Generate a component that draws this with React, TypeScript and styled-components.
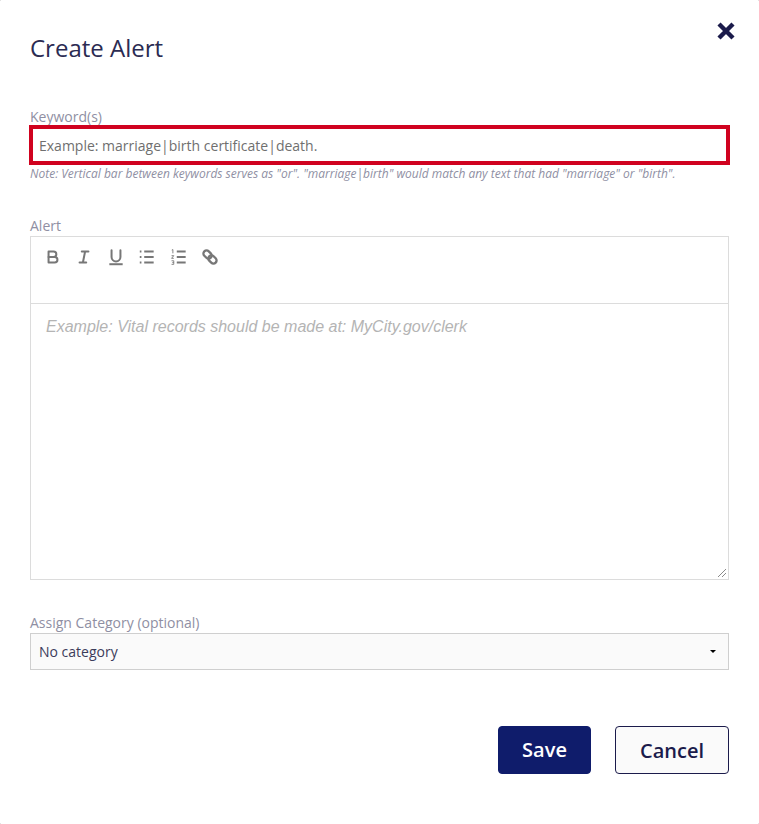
import styled, { createGlobalStyle } from "styled-components";

const GlobalStyle = createGlobalStyle`
  html, body {
    margin: 0;
    padding: 0;
    background: #8a8a8a;
    font-family: "Open Sans", sans-serif;
  }
`;

const Modal = styled.div`
  position: relative;
  box-sizing: border-box;
  width: 759px;
  height: 824px;
  padding: 30px 30px 0 30px;
  background: #fff;
  border-radius: 1px;
  overflow: hidden;
`;

const CloseButton = styled.button`
  position: absolute;
  top: 21px;
  right: 23px;
  width: 20px;
  height: 20px;
  padding: 0;
  border: 0;
  background: none;
  color: #1b1b4b;
`;

const Title = styled.h2`
  margin: 0;
  font-size: 24px;
  font-weight: 400;
  line-height: 36px;
  color: #2b2b52;
`;

const Field = styled.div<{ $top: number }>`
  display: flex;
  flex-direction: column;
  margin-top: ${(p) => p.$top}px;
`;

const Label = styled.label`
  font-size: 14px;
  line-height: 16px;
  color: #8f8fa3;
`;

const KeywordInput = styled.div`
  box-sizing: border-box;
  display: flex;
  align-items: center;
  height: 40px;
  margin: 0 -1px;
  padding: 0 6px;
  border: 4px solid #d0021f;
  background: #fff;
  font-size: 14px;
  color: #6f6f6f;
`;

const Note = styled.div`
  margin-top: 1px;
  font-size: 12px;
  line-height: 16px;
  font-style: italic;
  color: #8f8fa3;
`;

const Editor = styled.div`
  position: relative;
  box-sizing: border-box;
  height: 344px;
  margin-top: 2px;
  border: 1px solid #dcdcdc;
`;

const Toolbar = styled.div`
  box-sizing: border-box;
  display: flex;
  align-items: flex-start;
  gap: 11.4px;
  height: 67px;
  padding: 10px 0 0 12px;
  border-bottom: 1px solid #dcdcdc;
`;

const ToolIcon = styled.svg.attrs({ width: 20, height: 20, viewBox: "0 0 18 18" })`
  display: block;
  fill: none;
  stroke: #777;
  stroke-width: 1.8;
  stroke-linecap: round;
  stroke-linejoin: round;
`;

const Placeholder = styled.div`
  padding: 13px 15px;
  font-family: "Liberation Sans", Arial, sans-serif;
  font-size: 16px;
  line-height: 20px;
  font-style: italic;
  color: #b4b4b4;
`;

const ResizeGrip = styled.svg`
  position: absolute;
  right: 1px;
  bottom: 1px;
`;

const Select = styled.div`
  box-sizing: border-box;
  display: flex;
  align-items: center;
  justify-content: space-between;
  height: 37px;
  margin-top: 2px;
  padding: 0 12px 0 8px;
  border: 1px solid #cfcfcf;
  background: #fafafa;
  font-size: 14px;
  color: #3c3c5a;
`;

const Caret = styled.span`
  width: 0;
  height: 0;
  border-left: 3px solid transparent;
  border-right: 3px solid transparent;
  border-top: 3px solid #000;
`;

const Actions = styled.div`
  display: flex;
  justify-content: flex-end;
  gap: 24px;
  margin-top: 56px;
`;

const Button = styled.button<{ $primary?: boolean }>`
  box-sizing: border-box;
  height: 48px;
  width: ${(p) => (p.$primary ? "93px" : "114px")};
  padding: 0 0 ${(p) => (p.$primary ? "2px" : "0")} 0;
  border: 1px solid;
  border-color: ${(p) => (p.$primary ? "#0f1c6b" : "#1b1b4b")};
  border-radius: 4px;
  background: ${(p) => (p.$primary ? "#0f1c6b" : "#fafafa")};
  font-family: "Open Sans", sans-serif;
  font-size: 20px;
  font-weight: 600;
  color: ${(p) => (p.$primary ? "#fff" : "#1b1b4b")};
`;

export default function App() {
  return (
    <>
      <GlobalStyle />
      <Modal>
        <CloseButton aria-label="Close">
          <svg width="20" height="20" viewBox="0 0 20 20">
            <path d="M3 3 L17 17 M17 3 L3 17" stroke="currentColor" strokeWidth="4.4" />
          </svg>
        </CloseButton>
        <Title>Create Alert</Title>
        <Field $top={43}>
          <Label>Keyword(s)</Label>
          <KeywordInput>Example: marriage|birth certificate|death.</KeywordInput>
          <Note>
            Note: Vertical bar between keywords serves as "or". "marriage|birth" would match any text that had "marriage" or "birth".
          </Note>
        </Field>
        <Field $top={36}>
          <Label>Alert</Label>
          <Editor>
            <Toolbar>
              <ToolIcon>
                <path d="M5 4h4.5a2.5 2.5 0 0 1 0 5H5z" />
                <path d="M5 9h5.5a2.5 2.5 0 0 1 0 5H5z" />
              </ToolIcon>
              <ToolIcon strokeWidth={1.4}>
                <path d="M7 4h6M5 14h6M8 14l2-10" />
              </ToolIcon>
              <ToolIcon strokeWidth={1.4}>
                <path d="M5 3v6a4 4 0 0 0 8 0V3" />
                <path d="M3 15.5h12" strokeLinecap="butt" />
              </ToolIcon>
              <ToolIcon>
                <path d="M6.5 4h8.5M6.5 9h8.5M6.5 14h8.5" strokeLinecap="butt" />
                <path d="M2.5 4h1.5M2.5 9h1.5M2.5 14h1.5" strokeLinecap="butt" />
              </ToolIcon>
              <ToolIcon>
                <path d="M7 4h8M7 9h8M7 14h8" strokeLinecap="butt" />
                <path d="M2.5 2.8l1-.5v3.4M2.3 7.8h2l-2 2.4h2M2.3 12.4h2v3.2h-2M3 14h1.3" strokeWidth="0.8" strokeLinecap="butt" />
              </ToolIcon>
              <ToolIcon>
                <g transform="rotate(45 9 9)" strokeWidth="2.1">
                  <rect x="1.8" y="6.2" width="8.2" height="5.6" rx="2.8" />
                  <rect x="8" y="6.2" width="8.2" height="5.6" rx="2.8" />
                </g>
              </ToolIcon>
            </Toolbar>
            <Placeholder>Example: Vital records should be made at: MyCity.gov/clerk</Placeholder>
            <ResizeGrip width="10" height="10" viewBox="0 0 10 10">
              <path d="M1 9 L9 1 M5 9 L9 5" stroke="#8a8a8a" strokeWidth="1" />
            </ResizeGrip>
          </Editor>
        </Field>
        <Field $top={35}>
          <Label>Assign Category (optional)</Label>
          <Select>
            No category
            <Caret />
          </Select>
        </Field>
        <Actions>
          <Button $primary>Save</Button>
          <Button>Cancel</Button>
        </Actions>
      </Modal>
    </>
  );
}
